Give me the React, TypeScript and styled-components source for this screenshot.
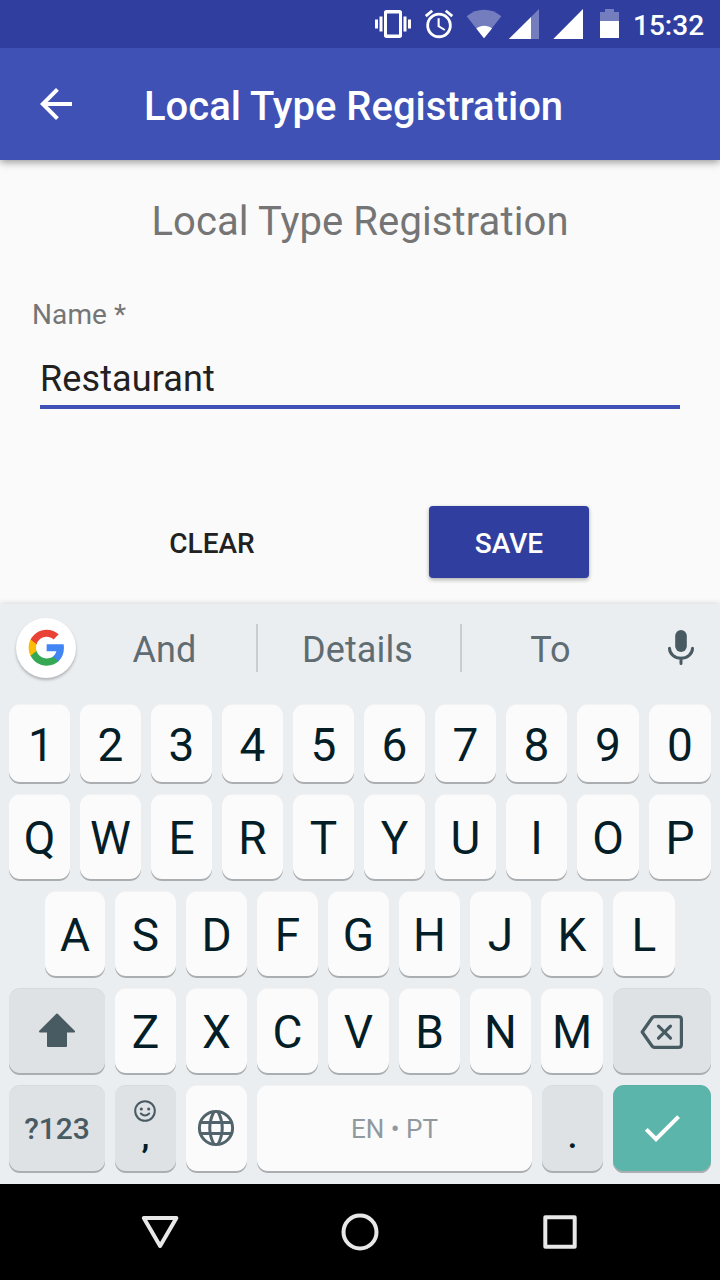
import React from "react";
import styled, { createGlobalStyle } from "styled-components";

const GlobalStyle = createGlobalStyle`
  *, *::before, *::after { box-sizing: border-box; }
  body { margin: 0; background: #fafafa; font-family: Roboto, sans-serif; }
  button, input { font-family: inherit; border: 0; padding: 0; margin: 0; background: none; outline: none; }
  svg { display: block; flex: none; }
`;

const Screen = styled.div`
  width: 720px;
  height: 1280px;
  display: flex;
  flex-direction: column;
  background: #fafafa;
  overflow: hidden;
`;

const StatusBar = styled.div`
  position: relative;
  z-index: 1;
  height: 48px;
  flex: none;
  display: flex;
  align-items: center;
  justify-content: flex-end;
  padding-right: 16px;
  background: #303f9f;
`;

const StatusIcon = styled.svg<{ $after: number }>`
  margin-right: ${(p) => p.$after}px;
  fill: #fff;
`;

const Clock = styled.span`
  width: 71px;
  font-size: 28px;
  line-height: 46px;
  padding-top: 4px;
  font-weight: 500;
  color: #fff;
  text-align: right;
`;

const AppBar = styled.header`
  height: 112px;
  flex: none;
  display: flex;
  align-items: center;
  padding-left: 32px;
  background: #3f51b5;
  box-shadow: 0 2px 8px rgba(0, 0, 0, 0.42);
`;

const BackButton = styled.button`
  width: 48px;
  height: 48px;
`;

const AppTitle = styled.h1`
  margin: 6px 0 0 64px;
  font-size: 40px;
  line-height: 48px;
  font-weight: 500;
  color: #fff;
`;

const Form = styled.main`
  height: 444px;
  flex: none;
  display: flex;
  flex-direction: column;
`;

const Heading = styled.h2`
  margin: 38px 0 0;
  font-size: 40px;
  line-height: 48px;
  letter-spacing: 0.1px;
  font-weight: 400;
  color: #757575;
  text-align: center;
`;

const Label = styled.label`
  margin: 52px 32px 0;
  font-size: 28px;
  line-height: 33px;
  letter-spacing: 0.1px;
  color: #757575;
`;

const TextField = styled.input`
  margin: 26px 40px 0;
  height: 52px;
  border-bottom: 4px solid #3f51b5;
  font-size: 36px;
  line-height: 42px;
  letter-spacing: 0.1px;
  padding-bottom: 5px;
  color: #212121;
`;

const Actions = styled.div`
  display: flex;
  margin-top: 97px;
  padding: 0 131px 0 132px;
  justify-content: space-between;
`;

const ActionButton = styled.button<{ $raised?: boolean }>`
  width: 160px;
  height: 72px;
  padding-top: 2px;
  border-radius: 4px;
  font-size: 28px;
  font-weight: 500;
  color: ${(p) => (p.$raised ? "#fff" : "#212121")};
  background: ${(p) => (p.$raised ? "#303f9f" : "transparent")};
  box-shadow: ${(p) => (p.$raised ? "0 2px 4px rgba(0,0,0,.28), 0 0 2px rgba(0,0,0,.1)" : "none")};
`;

const Keyboard = styled.section`
  height: 580px;
  flex: none;
  background: #ebeef1;
  box-shadow: 0 -1px 5px rgba(0, 0, 0, 0.13);
`;

const Suggestions = styled.div`
  height: 100px;
  display: flex;
  align-items: flex-start;
  padding: 14px 0 0 16px;
`;

const GoogleButton = styled.button`
  display: flex;
  align-items: flex-start;
  width: 60px;
  height: 60px;
  padding: 10.4px 0 0 11px;
  border-radius: 50%;
  background: #fff;
  box-shadow: 0 2px 3px rgba(0, 0, 0, 0.26);
`;

const Suggestion = styled.span<{ $width: number }>`
  width: ${(p) => p.$width}px;
  padding-right: 3px;
  font-size: 36px;
  line-height: 48px;
  letter-spacing: 0.1px;
  margin-top: 8px;
  color: #5f6c72;
  text-align: center;
`;

const Divider = styled.i`
  width: 2px;
  height: 48px;
  margin-top: 6px;
  background: #c8cdd0;
`;

const MicIcon = styled.svg`
  margin: 10px 0 0 25px;
`;

const KeyRow = styled.div<{ $columns: string; $height: number; $inset?: number }>`
  display: grid;
  grid-template-columns: ${(p) => p.$columns};
  column-gap: 10px;
  height: ${(p) => p.$height}px;
  padding: 0 ${(p) => p.$inset ?? 9}px;
  margin-bottom: 10px;
`;

type Tone = "light" | "gray" | "accent";
const tones: Record<Tone, string> = { light: "#fbfbfb", gray: "#dee2e5", accent: "#5cb5aa" };

const Key = styled.button<{ $tone?: Tone; $size?: number; $weight?: number; $color?: string; $lift?: number }>`
  display: flex;
  flex-direction: column;
  align-items: center;
  justify-content: center;
  min-width: 0;
  padding-bottom: ${(p) => p.$lift ?? 0}px;
  border-radius: 11px;
  background: ${(p) => tones[p.$tone ?? "light"]};
  box-shadow: inset 0 -2px 0 #abaeb0, inset 0 1px 0 rgba(0, 0, 0, 0.03);
  font-size: ${(p) => p.$size ?? 46}px;
  font-weight: ${(p) => p.$weight ?? 400};
  line-height: 54px;
  color: ${(p) => p.$color ?? "#041e28"};
`;

const DigitKey = styled(Key)<{ $nudge: number }>`
  padding-top: 2px;
  padding-left: ${(p) => p.$nudge}px;
`;

const SymbolKey = styled(Key)`
  justify-content: flex-start;
  padding-top: 15px;
`;

const Punctuation = styled.span<{ $offset: number; $bold?: boolean }>`
  height: 40px;
  line-height: 40px;
  margin-top: ${(p) => p.$offset}px;
  font-size: ${(p) => (p.$bold ? 32 : 36)}px;
  font-weight: ${(p) => (p.$bold ? 700 : 500)};
`;

const NavBar = styled.nav`
  height: 96px;
  flex: none;
  display: flex;
  align-items: center;
  justify-content: center;
  gap: 160px;
  background: #000;
`;

const ink = "#485a62";

const StatusIcons = () => (
  <>
    <StatusIcon $after={11} width="36" height="36" viewBox="0 0 24 24">
      <path d="M0 15h2V9H0v6zm3 2h2V7H3v10zm19-8v6h2V9h-2zm-3 8h2V7h-2v10zM16.5 2.67h-9C6.67 2.67 6 3.34 6 4.17v15.6c0 .83.67 1.5 1.5 1.5h9c.83 0 1.5-.67 1.5-1.5V4.17c0-.83-.67-1.5-1.5-1.5zM16 19H8V5h8v14z" />
    </StatusIcon>
    <StatusIcon $after={10} width="34" height="34" viewBox="0 0 24 24">
      <path d="M22 5.72l-4.6-3.86-1.29 1.53 4.6 3.86L22 5.72zM7.88 3.39L6.6 1.86 2 5.71l1.29 1.53 4.59-3.85zM12.5 8H11v6l4.75 2.85.75-1.23-4-2.37V8zM12 4c-4.97 0-9 4.03-9 9s4.02 9 9 9a9 9 0 0 0 0-18zm0 16c-3.87 0-7-3.13-7-7s3.13-7 7-7 7 3.13 7 7-3.13 7-7 7z" />
    </StatusIcon>
    <StatusIcon $after={6} width="36" height="48" viewBox="0 0 36 48">
      <path d="M.7 16.2C11 7.6 25 7.6 35.3 16.2L18 38.3z" fillOpacity=".33" />
      <path d="M10.3 28.4C15 24.8 21.5 24.8 26 28.4L18 38.3z" />
    </StatusIcon>
    <StatusIcon $after={13} width="32" height="48" viewBox="0 0 32 48">
      <path d="M23 17V39h8V9z" fillOpacity=".33" />
      <path d="M.8 39L23 17V39z" />
    </StatusIcon>
    <StatusIcon $after={16} width="31" height="48" viewBox="0 0 31 48">
      <path d="M.3 39L30 9V39z" />
    </StatusIcon>
    <StatusIcon $after={14} width="19" height="48" viewBox="0 0 19 48">
      <path d="M0 21V12H5V9H14V12H19V21z" fillOpacity=".33" />
      <path d="M0 21H19V38H0z" />
    </StatusIcon>
  </>
);

const GoogleLogo = () => (
  <svg width="39.3" height="39.3" viewBox="0 0 24 24">
    <path fill="#4285f4" d="M22.56 12.25c0-.78-.07-1.53-.2-2.25H12v4.26h5.92c-.26 1.37-1.04 2.53-2.21 3.31v2.77h3.57c2.08-1.92 3.28-4.74 3.28-8.09z" />
    <path fill="#34a853" d="M12 23c2.97 0 5.46-.98 7.28-2.66l-3.57-2.77c-.98.66-2.23 1.06-3.71 1.06-2.86 0-5.29-1.93-6.16-4.53H2.18v2.84C3.99 20.53 7.7 23 12 23z" />
    <path fill="#fbbc05" d="M5.84 14.09c-.22-.66-.35-1.36-.35-2.09s.13-1.43.35-2.09V7.07H2.18C1.43 8.55 1 10.22 1 12s.43 3.45 1.18 4.93l2.85-2.22.81-.62z" />
    <path fill="#ea4335" d="M12 5.38c1.62 0 3.06.56 4.21 1.64l3.15-3.15C17.45 2.09 14.97 1 12 1 7.7 1 3.99 3.47 2.18 7.07l3.66 2.84c.87-2.6 3.3-4.53 6.16-4.53z" />
  </svg>
);

const letters = (text: string) => text.split("").map((c) => <Key key={c}>{c}</Key>);

export default function App() {
  return (
    <Screen>
      <GlobalStyle />
      <StatusBar>
        <StatusIcons />
        <Clock>15:32</Clock>
      </StatusBar>
      <AppBar>
        <BackButton aria-label="Back">
          <svg width="48" height="48" viewBox="0 0 24 24" fill="#fff">
            <path d="M20 11H7.83l5.59-5.59L12 4l-8 8 8 8 1.41-1.41L7.83 13H20v-2z" />
          </svg>
        </BackButton>
        <AppTitle>Local Type Registration</AppTitle>
      </AppBar>
      <Form>
        <Heading>Local Type Registration</Heading>
        <Label htmlFor="name">Name *</Label>
        <TextField id="name" defaultValue="Restaurant" spellCheck={false} />
        <Actions>
          <ActionButton>CLEAR</ActionButton>
          <ActionButton $raised>SAVE</ActionButton>
        </Actions>
      </Form>
      <Keyboard>
        <Suggestions>
          <GoogleButton aria-label="Search">
            <GoogleLogo />
          </GoogleButton>
          <Suggestion $width={180}>And</Suggestion>
          <Divider />
          <Suggestion $width={202}>Details</Suggestion>
          <Divider />
          <Suggestion $width={180}>To</Suggestion>
          <MicIcon width="28" height="40" viewBox="0 0 28 40">
            <rect x="8.2" y="2" width="11.6" height="22" rx="5.8" fill={ink} />
            <path d="M2.5 20.3a11.5 10 0 0 0 23 0M14 30V35.5" fill="none" stroke={ink} strokeWidth="3" strokeLinecap="round" />
          </MicIcon>
        </Suggestions>
        <KeyRow $columns="repeat(8, 61px) 62px 62px" $height={80}>
          {"1234567890".split("").map((d) => (
            <DigitKey key={d} $nudge={d === "1" ? 3 : 0}>{d}</DigitKey>
          ))}
        </KeyRow>
        <KeyRow $columns="repeat(8, 61px) 62px 62px" $height={87}>{letters("QWERTYUIOP")}</KeyRow>
        <KeyRow $columns="60px repeat(6, 61px) 62px 62px" $height={87} $inset={45}>{letters("ASDFGHJKL")}</KeyRow>
        <KeyRow $columns="96px repeat(6, 61px) 62px 98px" $height={87}>
          <Key $tone="gray" $lift={3} aria-label="Shift">
            <svg width="38" height="36" viewBox="0 0 38 36">
              <path d="M19 2.5L36 19.5H28V34H10V19.5H2z" fill={ink} stroke={ink} strokeWidth="2" strokeLinejoin="round" />
            </svg>
          </Key>
          {letters("ZXCVBNM")}
          <Key $tone="gray" aria-label="Backspace">
            <svg width="44" height="36" viewBox="0 0 44 36" fill="none" stroke={ink} strokeWidth="3.2" strokeLinejoin="round" strokeLinecap="round">
              <path d="M14.5 2.6H38.5Q41.4 2.6 41.4 5.5V30.5Q41.4 33.4 38.5 33.4H14.5Q13 33.4 12 32L2.2 18 12 4Q13 2.6 14.5 2.6z" />
              <path d="M18.5 12.2L30.5 24.2M30.5 12.2L18.5 24.2" />
            </svg>
          </Key>
        </KeyRow>
        <KeyRow $columns="96px 61px 61px 275px 61px 98px" $height={88}>
          <Key $tone="gray" $size={30} $weight={500} $color={ink}>?123</Key>
          <SymbolKey $tone="gray">
            <svg width="23" height="22" viewBox="0 0 23 22">
              <circle cx="11" cy="11" r="9.8" fill="none" stroke={ink} strokeWidth="2" />
              <circle cx="7.3" cy="9" r="1.6" fill={ink} />
              <circle cx="14.7" cy="9" r="1.6" fill={ink} />
              <path d="M6.8 13.5Q11 17.5 15.2 13.5" fill="none" stroke={ink} strokeWidth="2" strokeLinecap="round" />
            </svg>
            <Punctuation $offset={-5} $bold>,</Punctuation>
          </SymbolKey>
          <Key aria-label="Language">
            <svg width="39" height="40" viewBox="0 0 39 40" fill="none" stroke="#52636b" strokeWidth="3">
              <circle cx="19" cy="19" r="16.6" />
              <path d="M17 2.5Q8.5 19 17 35.5M21 2.5Q29.5 19 21 35.5M3 13.6H35M3 24.6H35" />
            </svg>
          </Key>
          <Key $size={26} $color="#8f999e">EN • PT</Key>
          <SymbolKey $tone="gray">
            <Punctuation $offset={16}>.</Punctuation>
          </SymbolKey>
          <Key $tone="accent" $lift={2} aria-label="Done">
            <svg width="48" height="48" viewBox="0 0 24 24" fill="#fff">
              <path d="M9 16.17L4.83 12l-1.42 1.41L9 19 21 7l-1.41-1.41z" />
            </svg>
          </Key>
        </KeyRow>
      </Keyboard>
      <NavBar>
        <svg width="40" height="40" viewBox="0 0 40 40" fill="none" stroke="#e8e8e8" strokeWidth="4" strokeLinejoin="round">
          <path d="M3.8 6H36.4L20.1 34z" />
        </svg>
        <svg width="40" height="40" viewBox="0 0 40 40" fill="none" stroke="#e8e8e8" strokeWidth="4">
          <circle cx="20" cy="20" r="16.5" />
        </svg>
        <svg width="40" height="40" viewBox="0 0 40 40" fill="none" stroke="#e8e8e8" strokeWidth="4" strokeLinejoin="round">
          <path d="M5.3 5.3H34.7V34.7H5.3z" />
        </svg>
      </NavBar>
    </Screen>
  );
}
